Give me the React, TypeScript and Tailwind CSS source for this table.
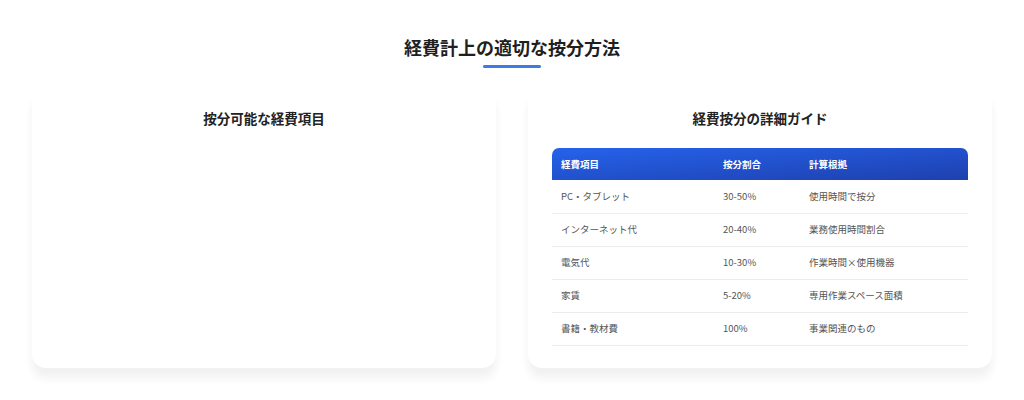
const rows = [
  { item: "PC・タブレット", ratio: "30-50%", basis: "使用時間で按分" },
  { item: "インターネット代", ratio: "20-40%", basis: "業務使用時間割合" },
  { item: "電気代", ratio: "10-30%", basis: "作業時間×使用機器" },
  { item: "家賃", ratio: "5-20%", basis: "専用作業スペース面積" },
  { item: "書籍・教材費", ratio: "100%", basis: "事業関連のもの" },
];

export default function App() {
  return (
    <div
      className="min-h-[400px] bg-white"
      style={{ fontFamily: '"Noto Sans CJK JP", "Noto Sans", sans-serif' }}
    >
      <section className="mx-auto w-[960px] pt-[35px]">
        <div className="flex flex-col items-center">
          <h2 className="text-[18px] font-bold leading-[24px] text-[#1f1f1f]">
            経費計上の適切な按分方法
          </h2>
          <div className="mt-[6px] h-[3px] w-[58px] rounded-full bg-[#3b7be8]" />
        </div>

        <div className="mt-[20px] grid grid-cols-2 gap-[32px]">
          <div className="rounded-[14px] bg-white px-6 pt-[20px] pb-[22px] shadow-[0_10px_10px_rgba(0,0,0,0.06)]">
            <h3 className="text-center text-[13.5px] font-bold leading-[20px] text-[#222]">
              按分可能な経費項目
            </h3>
          </div>

          <div className="rounded-[14px] bg-white px-6 pt-[20px] pb-[22px] shadow-[0_10px_10px_rgba(0,0,0,0.06)]">
            <h3 className="text-center text-[13.5px] font-bold leading-[20px] text-[#222]">
              経費按分の詳細ガイド
            </h3>
            <table className="mt-[20px] w-full border-collapse text-left">
              <thead>
                <tr className="bg-gradient-to-br from-[#2563eb] to-[#1e40af] text-white">
                  <th className="h-[32px] w-[171px] rounded-tl-[7px] pl-[9px] text-[9.5px] font-bold">
                    経費項目
                  </th>
                  <th className="h-[32px] w-[86px] text-[9.5px] font-bold">按分割合</th>
                  <th className="h-[32px] rounded-tr-[7px] text-[9.5px] font-bold">計算根拠</th>
                </tr>
              </thead>
              <tbody>
                {rows.map((r) => (
                  <tr key={r.item} className="border-b border-[#ececec]">
                    <td className="h-[33px] pl-[9px] text-[9.5px] text-[#555]">{r.item}</td>
                    <td className="h-[33px] text-[9.5px] text-[#555]">{r.ratio}</td>
                    <td className="h-[33px] text-[9.5px] text-[#555]">{r.basis}</td>
                  </tr>
                ))}
              </tbody>
            </table>
          </div>
        </div>
      </section>
    </div>
  );
}
